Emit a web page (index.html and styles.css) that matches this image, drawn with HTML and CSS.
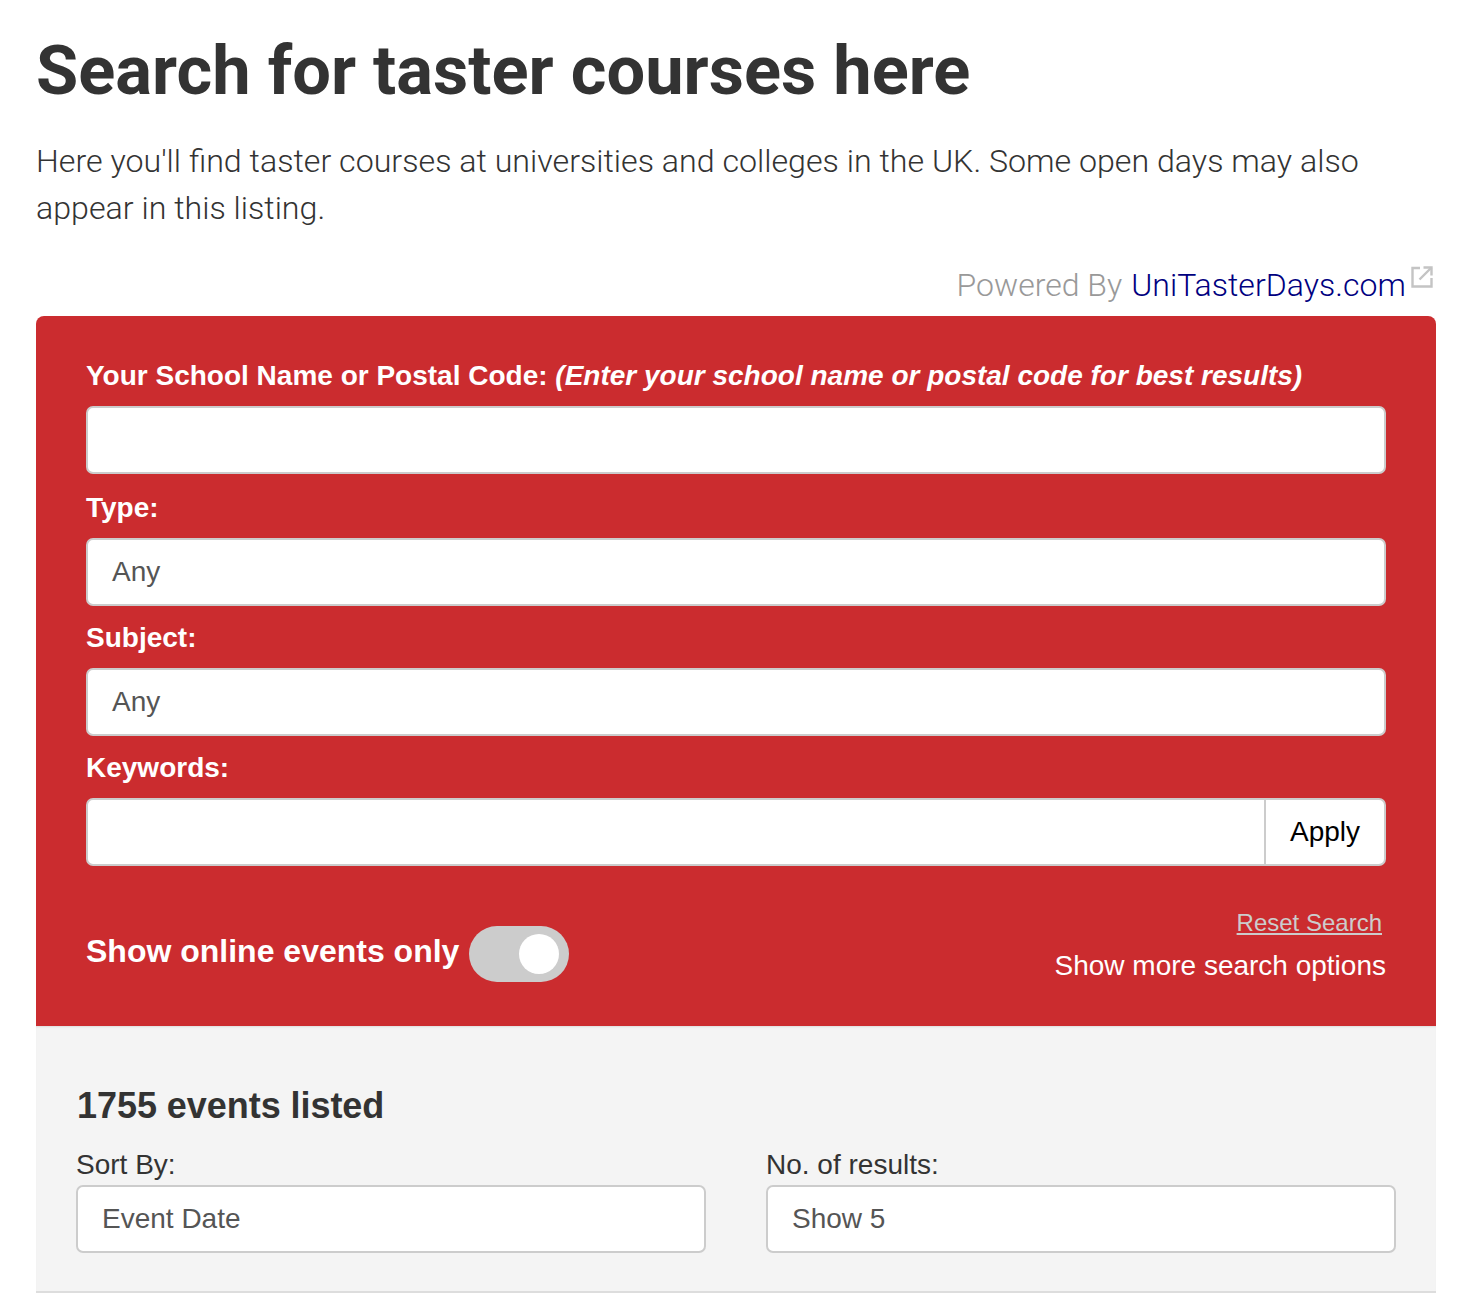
FILE: index.html
```html
<!DOCTYPE html>
<html lang="en">
<head>
<meta charset="utf-8">
<title>Search for taster courses</title>
<link rel="stylesheet" href="styles.css">
</head>
<body>
<main class="page">
  <h1 class="title">Search for taster courses here</h1>
  <p class="intro">Here you'll find taster courses at universities and colleges in the UK. Some open days may also appear in this listing.</p>
  <div class="powered">
    <span>Powered By</span>
    <a class="powered-link" href="#">UniTasterDays.com</a>
    <svg class="ext" width="22" height="22" viewBox="0 0 22 22" fill="none" stroke="#c4c4c4" stroke-width="2.400"><path d="M9 2H1.500V20.500H20.500V12"/><path d="M12.500 1.500H20.500V9.500"/><path d="M20.500 1.500L8.500 13.500"/></svg>
  </div>
  <form class="panel">
    <label class="lbl">Your School Name or Postal Code: <em>(Enter your school name or postal code for best results)</em></label>
    <div class="field field-first"></div>
    <label class="lbl">Type:</label>
    <div class="field">Any</div>
    <label class="lbl">Subject:</label>
    <div class="field">Any</div>
    <label class="lbl">Keywords:</label>
    <div class="field field-split"><span class="grow"></span><span class="apply">Apply</span></div>
    <div class="panel-foot">
      <div class="online">
        <span class="online-text">Show online events only</span>
        <span class="toggle"><span class="knob"></span></span>
      </div>
      <div class="links">
        <a class="reset" href="#">Reset Search</a>
        <a class="more" href="#">Show more search options</a>
      </div>
    </div>
  </form>
  <section class="results">
    <h2 class="count">1755 events listed</h2>
    <div class="sorts">
      <div class="sort">
        <label class="sort-lbl">Sort By:</label>
        <div class="field field-grey">Event Date</div>
      </div>
      <div class="sort">
        <label class="sort-lbl">No. of results:</label>
        <div class="field field-grey">Show 5</div>
      </div>
    </div>
  </section>
</main>
</body>
</html>
```
FILE: styles.css
```css
* { box-sizing: border-box; }
html, body { margin: 0; background: #fff; }
body { font-family: Roboto, sans-serif; color: #333; height: 1306px; overflow: hidden; }
.page { padding: 0 46px 0 36px; }
.title { margin: 0; padding-top: 31px; font-size: 68.6px; line-height: 80px; font-weight: 700; color: #333; }
.intro { margin: 27px 0 0; font-size: 32.17px; line-height: 47px; font-weight: 300; color: #333; }
.powered { margin-top: 34px; height: 50px; display: flex; justify-content: flex-end; align-items: flex-start; gap: 9px; font-size: 32px; line-height: 38px; font-weight: 300; color: #999; }
.powered-link { color: #000080; text-decoration: none; font-weight: 300; letter-spacing: 0.05px; margin-right: -4px; }
.ext { margin-top: 0; margin-left: 0; margin-right: 3px; }
.panel { background: #cb2c2f; border-radius: 8px 8px 0 0; padding: 40px 50px 0; height: 710px; display: flex; flex-direction: column; }
.lbl { color: #fff; font-family: "Liberation Sans", sans-serif; font-size: 28px; line-height: 40px; font-weight: 700; height: 50px; }
.lbl em { font-style: italic; }
.field { height: 68px; background: #fff; border: 2px solid #ccc; border-radius: 7px; font-size: 28px; line-height: 63px; padding-left: 24px; color: #555; font-family: "Liberation Sans", sans-serif; margin-bottom: 12px; }
.field-first { margin-bottom: 14px; }
.field-split { display: flex; padding-left: 0; }
.grow { flex: 1; }
.apply { width: 120px; border-left: 2px solid #ccc; color: #000; text-align: center; line-height: 64px; }
.panel-foot { display: flex; justify-content: space-between; margin-top: 30px; }
.online { display: flex; align-items: center; gap: 10px; height: 56px; margin-top: 18px; }
.online-text { color: #fff; font-family: "Liberation Sans", sans-serif; font-size: 32px; line-height: 50px; font-weight: 700; position: relative; top: -3px; }
.toggle { width: 100px; height: 56px; border-radius: 28px; background: #ccc; position: relative; display: block; }
.knob { position: absolute; right: 10px; top: 8px; width: 40px; height: 40px; border-radius: 50%; background: #fff; }
.links { display: flex; flex-direction: column; align-items: flex-end; font-family: "Liberation Sans", sans-serif; }
.reset { color: #ccc; font-size: 24px; line-height: 30px; margin-right: 4px; }
.more { color: #fff; font-size: 28px; line-height: 42px; text-decoration: none; margin-top: 7px; }
.results { background: #f4f4f4; border-bottom: 2px solid #ddd; height: 267px; padding: 58px 41px 0 40px; box-shadow: inset 0 2px 2px -1px #ddd; }
.count { margin: 0; font-family: "Liberation Sans", sans-serif; font-size: 36px; line-height: 44px; font-weight: 700; color: #333; padding-left: 1px; letter-spacing: -0.05px; }
.sorts { display: grid; grid-template-columns: 630px 630px; column-gap: 60px; margin-top: 18px; }
.sort-lbl { display: block; font-family: "Liberation Sans", sans-serif; font-size: 28px; line-height: 38px; color: #333; margin-bottom: 1px; }
.field-grey { margin: 0; line-height: 64px; }
```
